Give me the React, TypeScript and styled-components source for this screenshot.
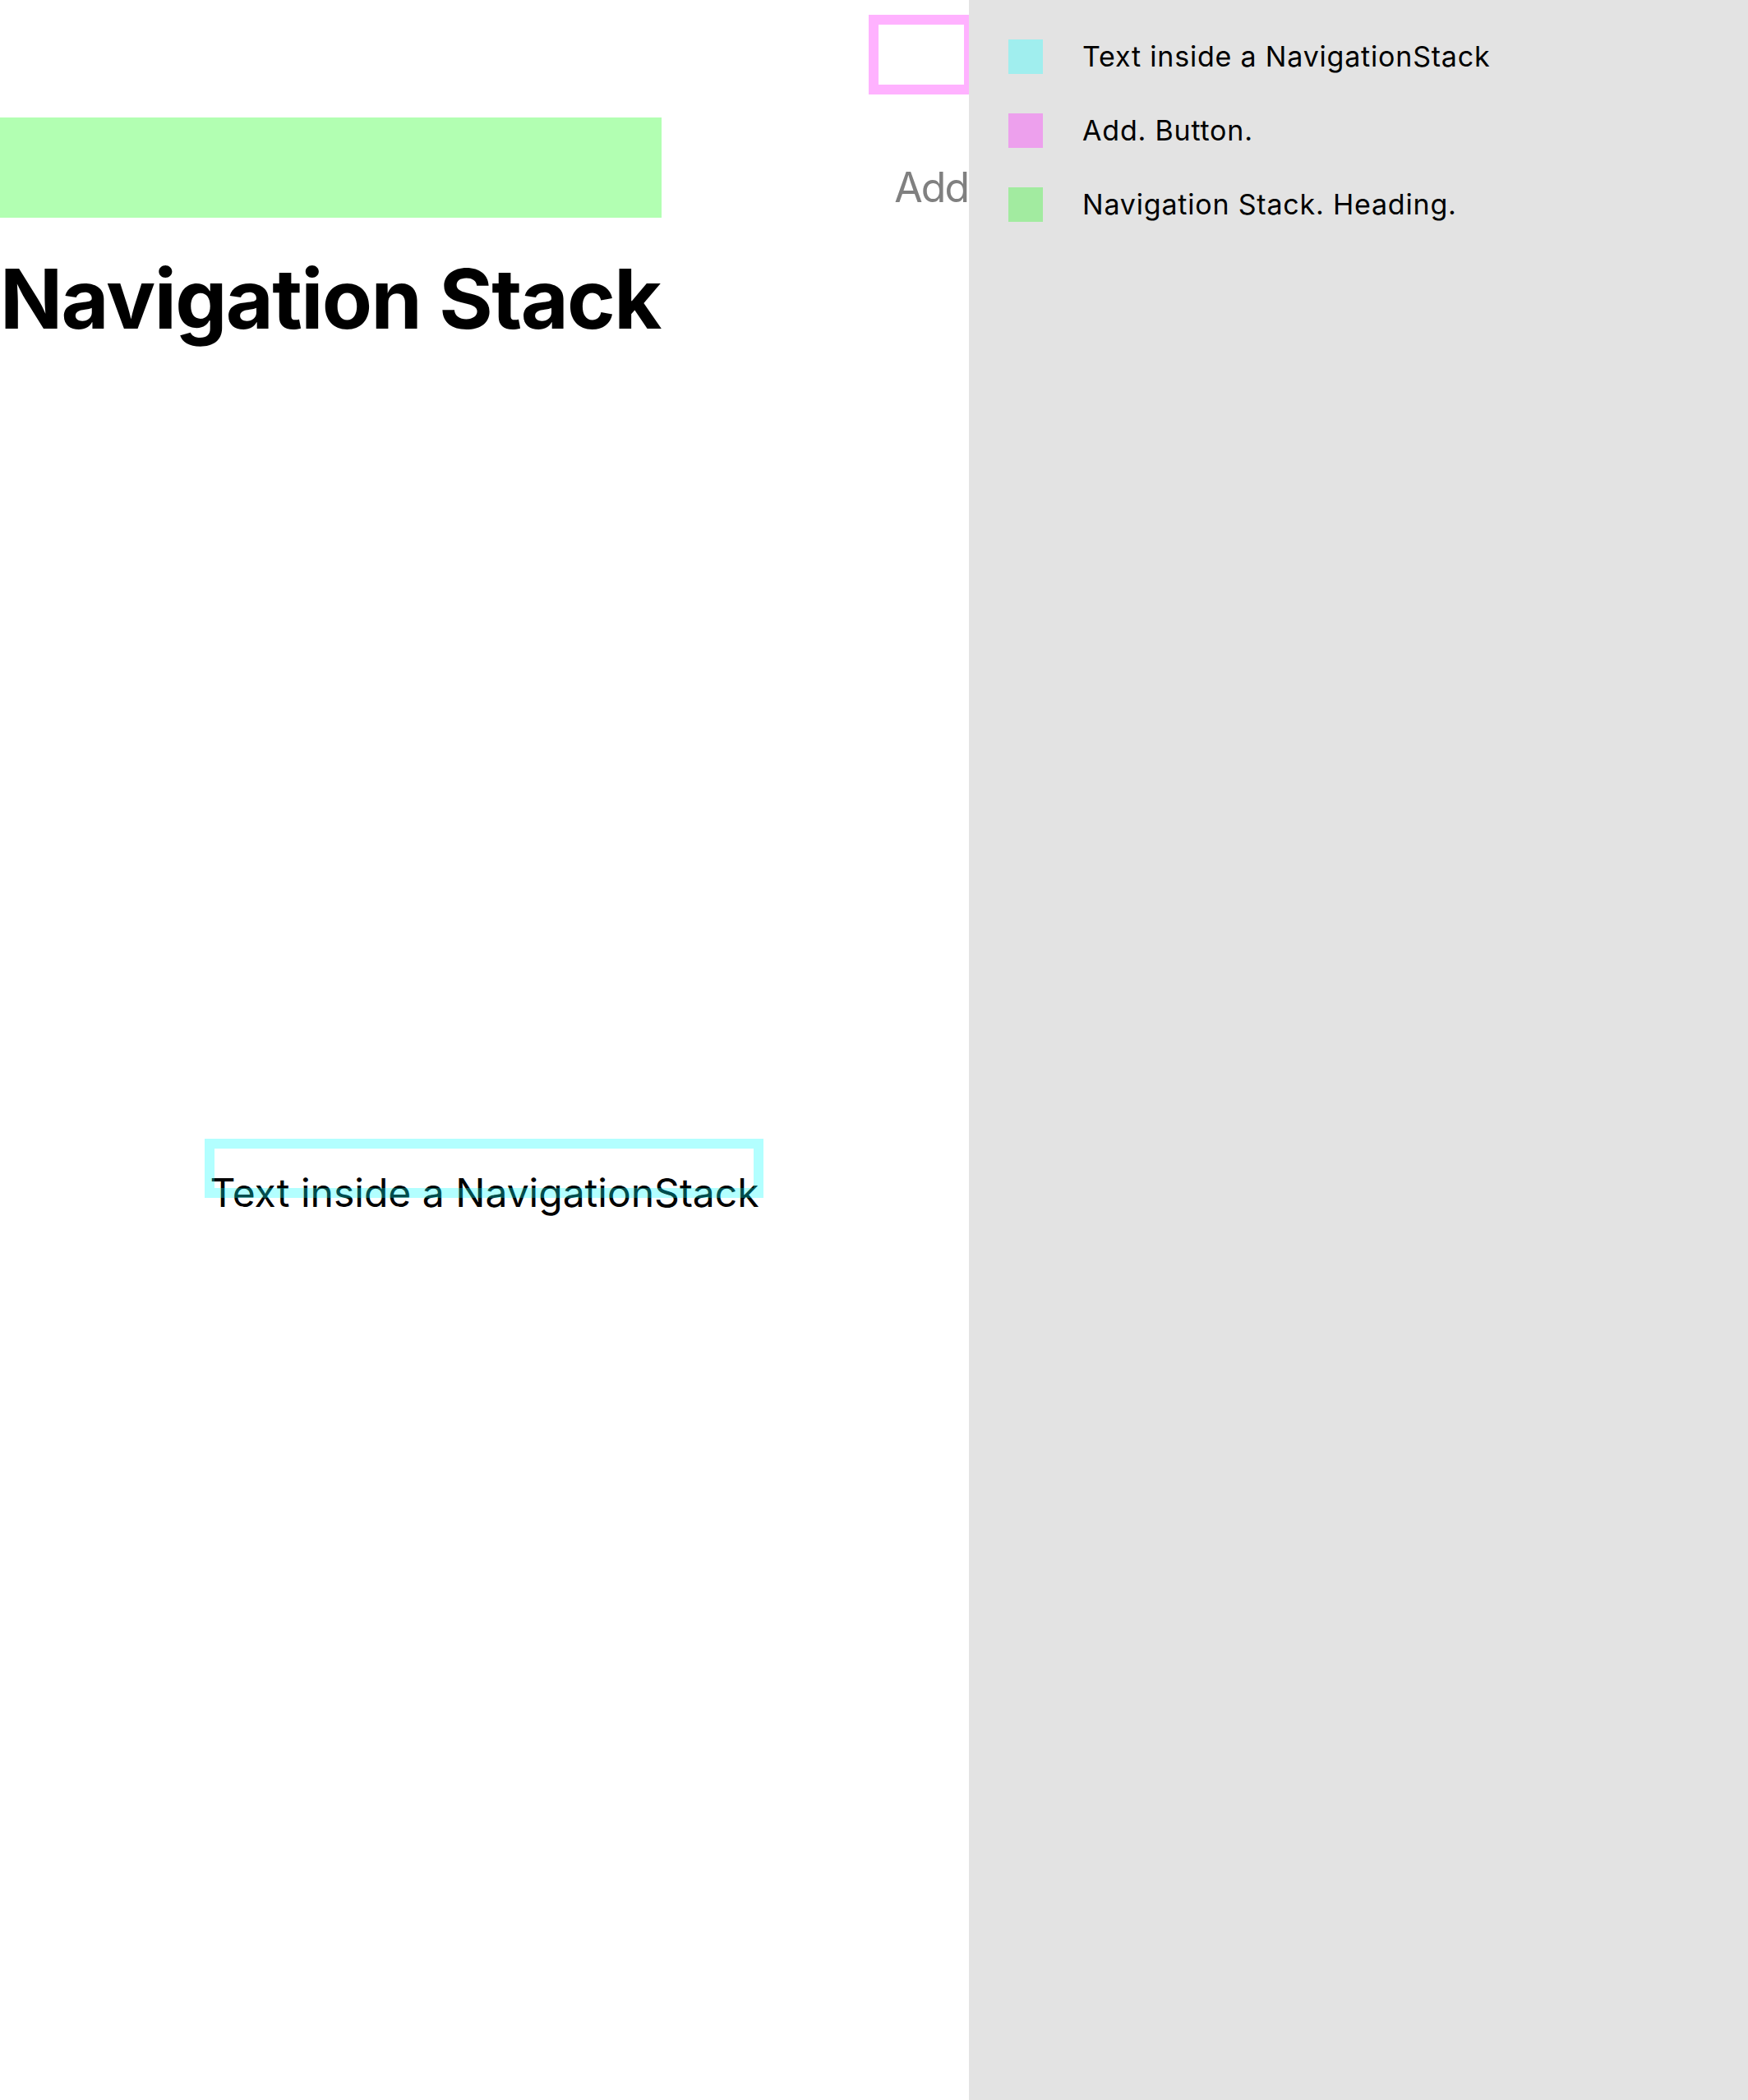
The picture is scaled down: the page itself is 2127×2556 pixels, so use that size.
import styled, { createGlobalStyle } from 'styled-components'

const GlobalStyle = createGlobalStyle`
  html, body {
    margin: 0;
    padding: 0;
    background: #ffffff;
  }
  body {
    font-family: Inter, "Noto Sans", "Liberation Sans", sans-serif;
  }
`

const Page = styled.div`
  display: flex;
  width: 2127px;
  height: 2556px;
  overflow: hidden;
`

const Preview = styled.div`
  position: relative;
  width: 1179px;
  flex-shrink: 0;
  background: #ffffff;
  overflow: hidden;
`

const Toolbar = styled.div`
  display: flex;
  justify-content: flex-end;
  padding: 202px 1px 0 0;
`

const AddButton = styled.button`
  border: none;
  background: none;
  padding: 0;
  font-family: inherit;
  font-size: 50px;
  line-height: 52px;
  letter-spacing: -2px;
  color: #808080;
`

const Heading = styled.h1`
  margin: 60px 0 0 0;
  padding: 0;
  font-size: 100px;
  line-height: 100px;
  font-weight: 700;
  letter-spacing: -1.6px;
  color: #000000;
`

const Content = styled.p`
  margin: 1014px 0 0 0;
  text-align: center;
  font-size: 48px;
  line-height: 47px;
  color: #000000;
`

const Highlight = styled.div<{ $color: string; $filled?: boolean }>`
  position: absolute;
  box-sizing: border-box;
  border: 12px solid ${({ $color, $filled }) => ($filled ? 'transparent' : $color)};
  background: ${({ $color, $filled }) => ($filled ? $color : 'transparent')};
  pointer-events: none;
`

const Legend = styled.div`
  flex: 1;
  background: #e3e3e3;
  padding: 48px 0 0 48px;
  display: flex;
  flex-direction: column;
  gap: 48px;
`

const LegendRow = styled.div`
  display: flex;
  align-items: center;
  gap: 48px;
  height: 42px;
`

const Swatch = styled.span<{ $color: string }>`
  width: 42px;
  height: 42px;
  flex-shrink: 0;
  background: ${({ $color }) => $color};
`

const LegendLabel = styled.span`
  font-size: 34px;
  line-height: 42px;
  letter-spacing: 0.8px;
  color: #000000;
`

const legendItems = [
  { color: '#a0eeee', label: 'Text inside a NavigationStack' },
  { color: '#eda0ed', label: 'Add. Button.' },
  { color: '#a2eba0', label: 'Navigation Stack. Heading.' },
]

function App() {
  return (
    <>
      <GlobalStyle />
      <Page>
        <Preview>
          <Toolbar>
            <AddButton>Add</AddButton>
          </Toolbar>
          <Heading>Navigation Stack</Heading>
          <Content>Text inside a NavigationStack</Content>

          <Highlight $color="rgba(255, 0, 255, 0.3)" style={{ left: 1057, top: 18, width: 128, height: 97 }} />
          <Highlight $color="rgba(0, 255, 0, 0.3)" $filled style={{ left: 0, top: 143, width: 805, height: 122 }} />
          <Highlight $color="rgba(0, 255, 255, 0.3)" style={{ left: 249, top: 1386, width: 680, height: 72 }} />
        </Preview>
        <Legend>
          {legendItems.map((item) => (
            <LegendRow key={item.label}>
              <Swatch $color={item.color} />
              <LegendLabel>{item.label}</LegendLabel>
            </LegendRow>
          ))}
        </Legend>
      </Page>
    </>
  )
}

export default App
